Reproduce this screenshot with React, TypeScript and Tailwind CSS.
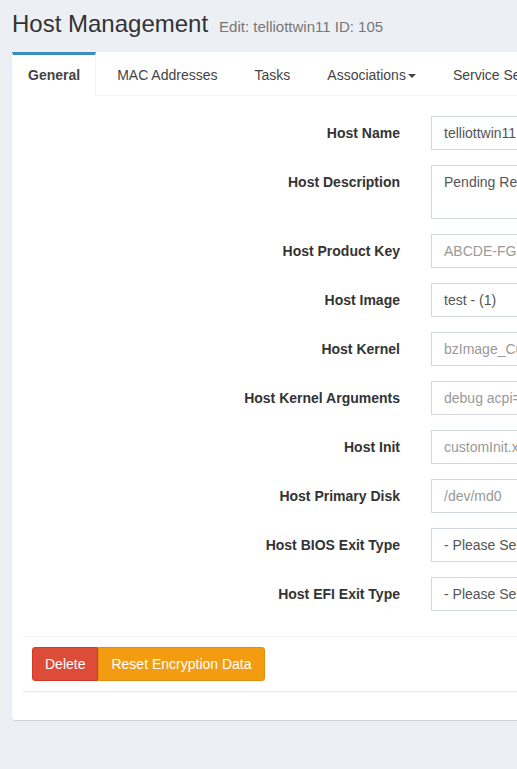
import React from 'react'

type Field = {
  label: string
  value: string
  muted?: boolean
  multiline?: boolean
}

const fields: Field[] = [
  { label: 'Host Name', value: 'telliottwin11' },
  { label: 'Host Description', value: 'Pending Registration created by FOG_CLIENT', multiline: true },
  { label: 'Host Product Key', value: 'ABCDE-FGHIJ-KLMNO-PQRST-UVWXY', muted: true },
  { label: 'Host Image', value: 'test - (1)' },
  { label: 'Host Kernel', value: 'bzImage_Custom', muted: true },
  { label: 'Host Kernel Arguments', value: 'debug acpi=off', muted: true },
  { label: 'Host Init', value: 'customInit.xz', muted: true },
  { label: 'Host Primary Disk', value: '/dev/md0', muted: true },
  { label: 'Host BIOS Exit Type', value: '- Please Select an option -' },
  { label: 'Host EFI Exit Type', value: '- Please Select an option -' },
]

const tabs = ['General', 'MAC Addresses', 'Tasks', 'Associations', 'Service Settings', 'Inventory']

function FormRow({ field }: { field: Field }) {
  return (
    <div className="flex items-start mb-[15px]">
      {/* Label column */}
      <label className="w-[368px] shrink-0 text-right pt-[7px] leading-[20px] text-[14px] font-bold text-[#333]">
        {field.label}
      </label>
      <div
        className={
          'ml-[31px] w-[320px] shrink-0 border border-[#d2d6de] bg-white px-3 py-[6px] text-[14px] leading-[20px] whitespace-nowrap overflow-hidden ' +
          (field.multiline ? 'h-[54px]' : 'h-[34px]') +
          (field.muted ? ' text-[#999]' : ' text-[#555]')
        }
      >
        {field.value}
      </div>
    </div>
  )
}

export default function App() {
  return (
    <div
      className="min-h-screen w-[517px] overflow-hidden bg-[#ecf0f5] pt-[11px] pb-[49px]"
      style={{ fontFamily: '"Liberation Sans", Arial, sans-serif' }}
    >
      {/* Header */}
      <h1 className="h-[26px] px-3 mb-[15px] text-[24px] leading-[26px] text-[#333] whitespace-nowrap">
        Host Management
        <small className="pl-[11px] text-[15px] leading-[26px] text-[#777]">Edit: telliottwin11 ID: 105</small>
      </h1>

      {/* Tabs card */}
      <div className="ml-3 w-[760px] bg-white rounded-[3px] shadow-[0_1px_1px_rgba(0,0,0,0.12)]">
        <ul className="flex border-b border-[#f4f4f4]">
          {tabs.map((t, i) => (
            <li
              key={t}
              className={
                i === 0
                  ? 'border-t-[3px] border-t-[#3c8dbc] border-l border-l-transparent border-r border-r-[#f4f4f4] bg-white -mb-px mr-[5px]'
                  : 'border-t-[3px] border-t-transparent border-x border-x-transparent mr-[5px]'
              }
            >
              <a
                className={
                  'flex items-center px-[15px] py-[10px] text-[14px] leading-[20px] text-[#444] whitespace-nowrap ' +
                  (i === 0 ? 'font-bold' : '')
                }
              >
                {t}
                {t === 'Associations' && (
                  <span className="ml-[2px] mt-[2px] inline-block w-0 h-0 border-x-[4px] border-x-transparent border-t-[4px] border-t-[#444]" />
                )}
              </a>
            </li>
          ))}
        </ul>

        {/* Tab content */}
        <div className="p-[10px] pb-[29px]">
          <div className="bg-white rounded-[3px] shadow-[0_1px_1px_rgba(0,0,0,0.1)]">
            <div className="px-[10px] pt-[10px] pb-[10px]">
              {fields.map((f) => (
                <FormRow key={f.label} field={f} />
              ))}
            </div>
            <div className="border-t border-[#f4f4f4] p-[10px]">
              <div className="flex">
                <button className="h-[34px] px-3 text-[14px] text-white bg-[#dd4b39] border border-[#d73925] rounded-l-[3px]">
                  Delete
                </button>
                <button className="h-[34px] px-3 text-[14px] text-white bg-[#f39c12] border border-[#e08e0b] rounded-r-[3px]">
                  Reset Encryption Data
                </button>
              </div>
            </div>
          </div>
        </div>
      </div>
    </div>
  )
}
